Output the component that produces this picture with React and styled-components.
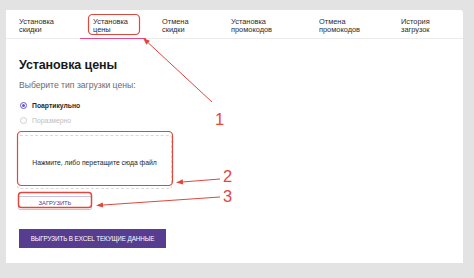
import React from "react";
import styled, { createGlobalStyle } from "styled-components";

const Global = createGlobalStyle`
  html, body { margin: 0; padding: 0; }
  body {
    background: #e3e3e3;
    font-family: "Liberation Sans", Arial, sans-serif;
    width: 474px; height: 278px; overflow: hidden;
  }
`;

const Page = styled.div`
  position: relative;
  width: 474px;
  height: 278px;
  padding: 10px 11px 0 6px;
  box-sizing: border-box;
`;

const Card = styled.div`
  background: #fff;
  width: 457px;
  height: 253px;
  border-radius: 0 3px 0 0;
  display: flex;
  flex-direction: column;
`;

const TabBar = styled.div`
  display: grid;
  grid-template-columns: 74px 69px 69px 88px 82px 1fr;
  height: 28px;
  border-bottom: 1px solid #ebebeb;
`;

const Tab = styled.div`
  position: relative;
  padding: 8px 0 0 13px;
  font-size: 7.4px;
  line-height: 8.4px;
  color: #2b2b2b;
  &::after {
    content: "";
    display: ${(p) => (p.$active ? "block" : "none")};
    position: absolute;
    left: 0;
    bottom: -1px;
    width: 66px;
    height: 1px;
    background: #e8498a;
  }
`;

const Content = styled.div`
  padding: 19px 0 0 13px;
  display: flex;
  flex-direction: column;
  align-items: flex-start;
`;

const Title = styled.h1`
  margin: 0;
  font-size: 12.5px;
  line-height: 14px;
  font-weight: 700;
  color: #1a1a1a;
  letter-spacing: -0.1px;
`;

const Subtitle = styled.p`
  margin: 8px 0 0;
  font-size: 8.6px;
  line-height: 10px;
  color: #6b6b6b;
`;

const RadioRow = styled.label`
  display: flex;
  align-items: center;
  gap: 5px;
  margin-top: ${(p) => p.$mt}px;
  font-size: 6.8px;
  font-weight: ${(p) => (p.$checked ? 700 : 400)};
  color: ${(p) => (p.$checked ? "#2a2a2a" : "#bdbdbd")};
`;

const RadioDot = styled.span`
  width: 7px;
  height: 7px;
  border-radius: 50%;
  box-sizing: border-box;
  border: 1px solid ${(p) => (p.$checked ? "#6b56c4" : "#cfcfcf")};
  display: flex;
  align-items: center;
  justify-content: center;
  margin-left: 1px;
  &::after {
    content: "";
    width: 3px;
    height: 3px;
    border-radius: 50%;
    background: #6b56c4;
    display: ${(p) => (p.$checked ? "block" : "none")};
  }
`;

const DropZone = styled.div`
  margin-top: 11px;
  margin-left: -2px;
  width: 155px;
  height: 54px;
  box-sizing: border-box;
  border: 1px dashed #dadada;
  border-radius: 3px;
  display: flex;
  align-items: center;
  justify-content: center;
  font-size: 6.8px;
  color: #1e1e1e;
`;

const UploadButton = styled.button`
  margin-top: 7px;
  margin-left: -1px;
  width: 74px;
  height: 14px;
  border: 1px solid #c9c2e6;
  border-radius: 2px;
  background: #fff;
  color: #4d3f93;
  font-family: inherit;
  font-size: 5.8px;
  padding: 0;
`;

const ExcelButton = styled.button`
  margin-top: 19px;
  width: 147px;
  height: 19px;
  border: none;
  background: #573d8f;
  color: #fff;
  font-family: inherit;
  font-size: 6.3px;
  letter-spacing: -0.1px;
  padding: 0;
`;

const Overlay = styled.svg`
  position: absolute;
  left: 0;
  top: 0;
  pointer-events: none;
`;

const Num = styled.text`
  font-family: "Liberation Sans", Arial, sans-serif;
  font-size: 16.5px;
  fill: #e0473d;
`;

const RED = "#e0473d";

function Arrow({ x1, y1, x2, y2 }) {
  const a = Math.atan2(y2 - y1, x2 - x1);
  const L = 7, W = 2.6;
  const bx = x2 - L * Math.cos(a), by = y2 - L * Math.sin(a);
  const px = -Math.sin(a) * W, py = Math.cos(a) * W;
  return (
    <g>
      <line x1={x1} y1={y1} x2={bx} y2={by} stroke={RED} strokeWidth="1" />
      <polygon points={`${x2},${y2} ${bx + px},${by + py} ${bx - px},${by - py}`} fill={RED} />
    </g>
  );
}

const tabs = [
  ["Установка", "скидки"],
  ["Установка", "цены"],
  ["Отмена", "скидки"],
  ["Установка", "промокодов"],
  ["Отмена", "промокодов"],
  ["История", "загрузок"],
];

export default function App() {
  return (
    <>
      <Global />
      <Page>
        <Card>
          <TabBar>
            {tabs.map((t, i) => (
              <Tab key={i} $active={i === 1}>
                {t[0]}
                <br />
                {t[1]}
              </Tab>
            ))}
          </TabBar>
          <Content>
            <Title>Установка цены</Title>
            <Subtitle>Выберите тип загрузки цены:</Subtitle>
            <RadioRow $checked $mt={12}>
              <RadioDot $checked />
              Поартикульно
            </RadioRow>
            <RadioRow $mt={8}>
              <RadioDot />
              Поразмерно
            </RadioRow>
            <DropZone>Нажмите, либо перетащите сюда файл</DropZone>
            <UploadButton>ЗАГРУЗИТЬ</UploadButton>
            <ExcelButton>ВЫГРУЗИТЬ В EXCEL ТЕКУЩИЕ ДАННЫЕ</ExcelButton>
          </Content>
        </Card>
        <Overlay width="474" height="278" viewBox="0 0 474 278">
          <rect x="88.5" y="14.5" width="51" height="20" rx="4" fill="none" stroke={RED} strokeWidth="1.2" />
          <rect x="17.5" y="131.5" width="155" height="54" rx="4" fill="none" stroke={RED} strokeWidth="1.2" />
          <rect x="18.5" y="192.5" width="73" height="15" rx="3" fill="none" stroke={RED} strokeWidth="1.5" />
          <Arrow x1={212} y1={102} x2={143} y2={38} />
          <Arrow x1={220} y1={179} x2={176} y2={182.5} />
          <Arrow x1={220} y1={197} x2={96} y2={205.5} />
          <Num x="215" y="125">1</Num>
          <Num x="223" y="182">2</Num>
          <Num x="223" y="202">3</Num>
        </Overlay>
      </Page>
    </>
  );
}
